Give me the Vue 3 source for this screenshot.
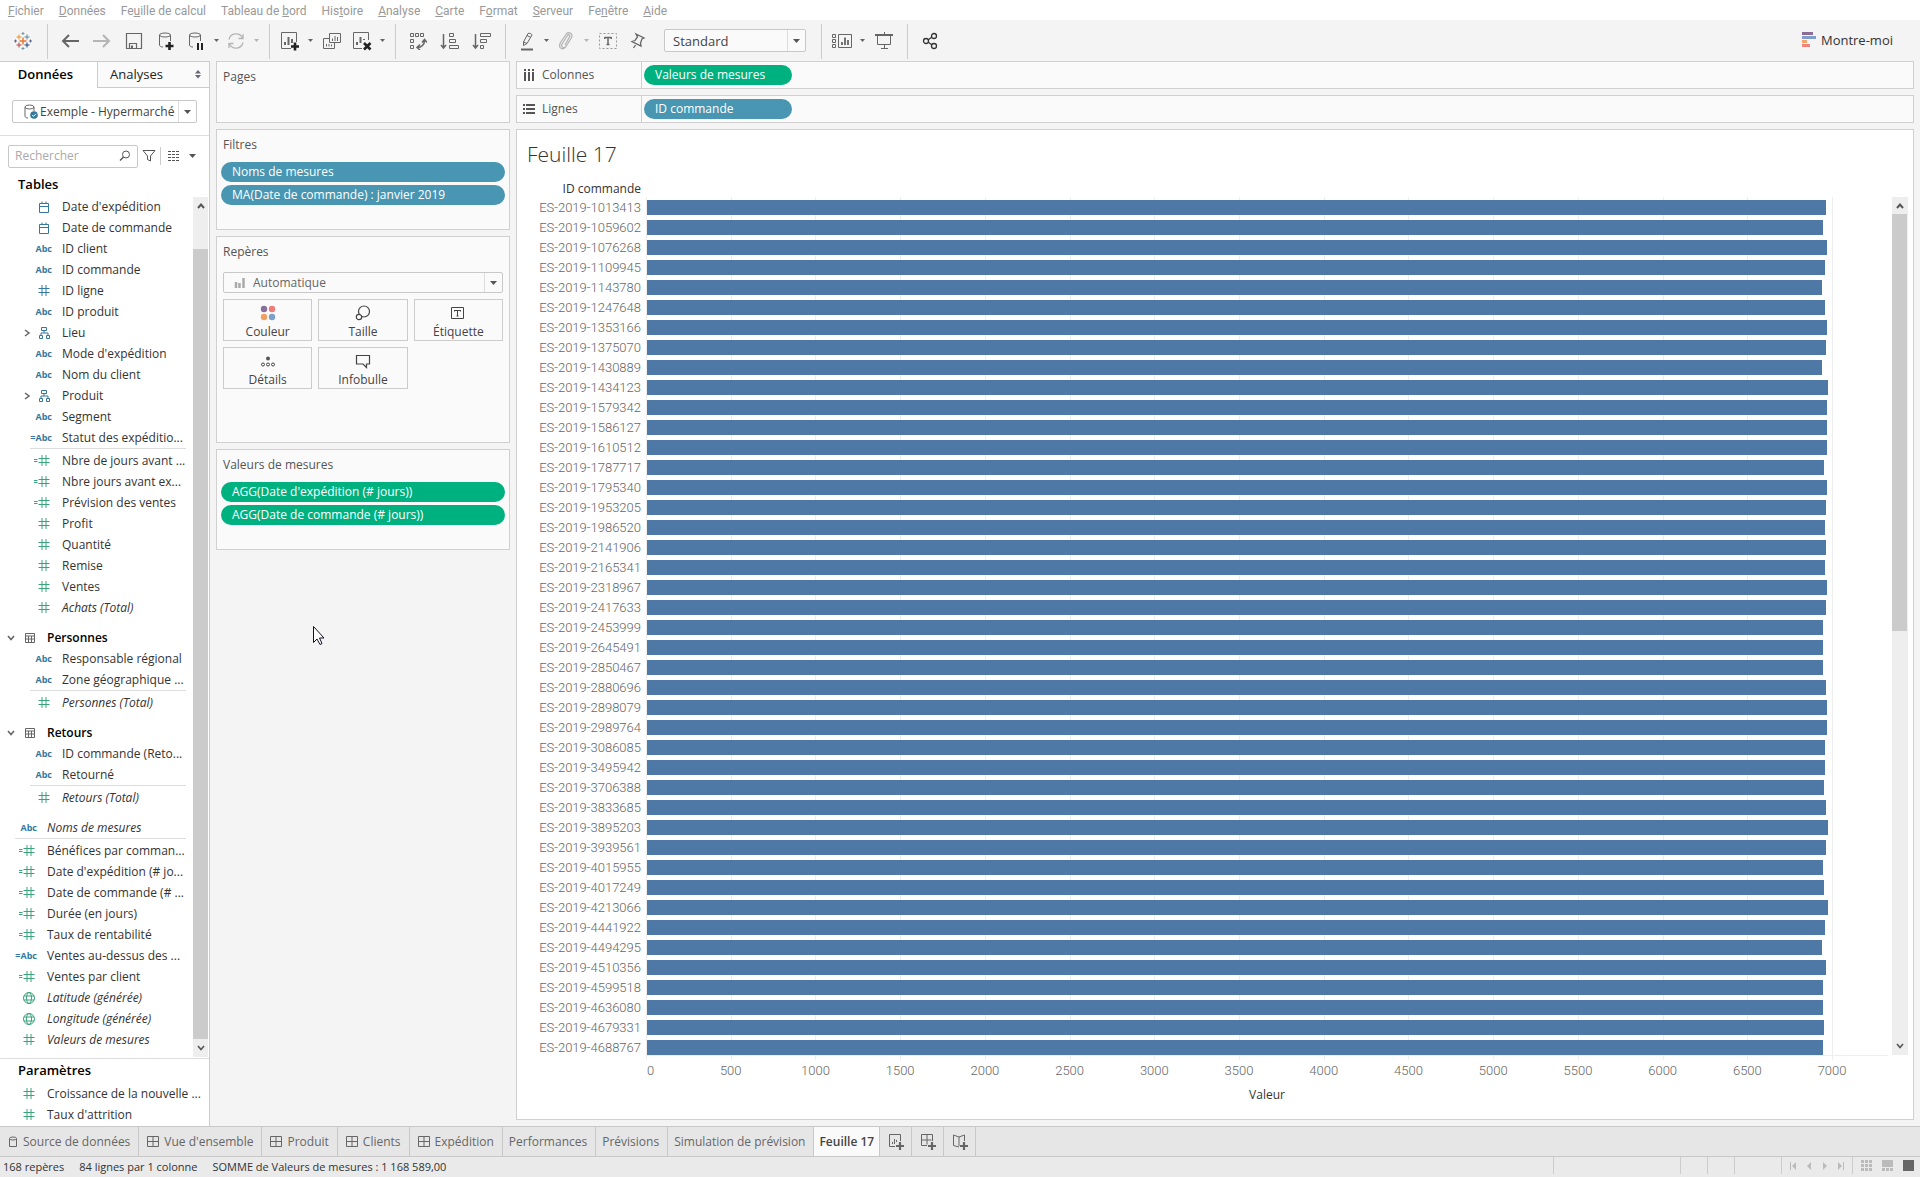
<script setup>
import { h, ref } from 'vue'

const hash = '<path d="M6 2v11M10 2v11M2.500 5.500h11M2.500 9.500h11"/>'
const cyl = '<ellipse cx="8" cy="4" rx="5.500" ry="2"/><path d="M2.500 4v10c0 1.200 1.500 2 3.500 2M13.500 4v6"/>'
const icons = {
  back: [18, 18, '<path stroke-width="2" d="M2 9h16M8 3 2 9l6 6"/>'],
  save: [18, 18, '<path stroke-width="1.200" d="M1.500 1.500h15v15h-15zM4.500 16v-4.500h7V16"/><path stroke-width="2" d="M7 13.500v2.500"/>'],
  dbadd: [18, 20, `${cyl}<path stroke="#222" stroke-width="2.600" d="M12.500 11v8M8.500 15h8"/>`],
  dbpause: [18, 20, `${cyl}<path stroke="#222" stroke-width="2" d="M11 12v7M15 12v7"/>`],
  refresh: [18, 18, '<path stroke-width="1.300" d="M2 7.500A7.200 7.200 0 0 1 15.500 6M16 10.500A7.200 7.200 0 0 1 2.500 12M16 2v4.500h-4.500M2 16v-4.500h4.500"/>'],
  sheetadd: [20, 20, '<path d="M11 17.500H1.500v-16h15V11"/><path stroke-width="2" d="M5 14v-3M8.500 14V6M12 12V8"/><path stroke="#222" stroke-width="2.600" d="M15 11.500v8M11 15.500h8"/>'],
  duplicate: [18, 18, '<path d="M6.500 1.500h11v9h-11zM6 6.500H.5v10h11v-6M9.500 9V6.500M12 9V4M14.500 9V5M3.500 14.500v-2.500M6 14.500v-2.500M8.500 14.500v-2"/>'],
  sheetclear: [20, 20, '<path d="M10 17.500H1.500v-16h15V9"/><path stroke-width="2" d="M5 14v-3M8.500 12V6M12 9V8"/><path stroke="#222" stroke-width="2.600" d="m12 12 6.500 6.500M18.500 12 12 18.500"/>'],
  swap: [18, 18, '<path d="M1.500 1.500h3v3h-3zM6.500 1.500h3v3h-3zM11.500 1.500h3v3h-3zM1.500 7.500h3v3h-3zM1.500 13.500h3v3h-3z"/><path stroke-width="1.500" d="M8.500 15.500c4 0 7-3 7-7M13 10.500l2.500-3 2.500 3M11 12.500l-3 3 3 2.500"/>'],
  asc: [20, 18, '<path stroke-width="1.500" d="M3.500 2v14M1 13l2.500 3 2.500-3"/><path d="M9.500 1.500h4v3h-4zM9.500 7.500h6v3h-6zM9.500 13.500h9v3h-9z"/>'],
  desc: [20, 18, '<path stroke-width="1.500" d="M3.500 2v14M1 13l2.500 3 2.500-3"/><path d="M8.500 1.500h10v3h-10zM8.500 7.500h6v3h-6zM8.500 13.500h3v3h-3z"/>'],
  pen: [18, 20, '<path d="M11 2.500 6.500 11v3.500L10 12.500l5-8.500c0-1-3-2.500-4-1.500zM6.500 11l3.500 1.500M10 4.500l4 2"/><path stroke-width="2" d="M4 18.500h12"/>'],
  clip: [16, 18, '<path stroke-width="1.300" d="m7 13 4.500-8c1-2-1-3-2-1.500L4 12c-1.500 3 2 5 4 2.500l5.500-9c2-4-3.500-6.500-5.500-3L2.500 10.500c-2.500 5 1 7.500 4 5.500"/>'],
  text: [18, 18, '<path stroke-dasharray="2 2" d="M.5 1.500h17v15H.5z"/><path stroke="#666" stroke-width="1.500" d="M6 5.500h6M9 5.500V13M7.500 12.500h3M5.800 5v2M12.200 5v2"/>'],
  pin: [16, 18, '<path stroke-width="1.300" d="m6 2 8 4-2 1-1.500 4 .5 3-9-4.500 3-1L7.500 5 6 2zM6.500 11.500 3.500 16"/>'],
  cards: [20, 16, '<path d="M.5 1.500h3v3h-3zM.5 6.500h3v3h-3zM.5 11.500h3v3h-3zM6.500 1.500h13v13h-13z"/><path stroke-width="1.800" d="M10 12V9M13 12V4.500M16 12V7"/>'],
  present: [18, 18, '<path d="M2.500 3v9.500h13V3M9.500 0v2M9.500 12v4M6 16.500h7"/><path stroke-width="2" d="M0 3h18"/>'],
  share: [16, 18, '<g stroke="#333" stroke-width="1.300"><circle cx="4" cy="9" r="2.500"/><circle cx="12" cy="4" r="2.500"/><circle cx="12" cy="14" r="2.500"/><path d="m6.200 7.700 3.600-2.400M6.200 10.300l3.600 2.400"/></g>'],
  logo: [18, 18, '<g><path stroke="#e8762d" stroke-width="1.400" d="M9 5.500v7M5.500 9h7"/><path stroke="#eb9129" d="M5 2.500v5M2.500 5h5"/><path stroke="#5b879b" d="M13 2.500v5M10.500 5h5"/><path stroke="#b3433f" d="M5 10.500v5M2.500 13h5"/><path stroke="#1f457e" d="M13 10.500v5M10.500 13h5"/><path stroke="#7199a6" d="M9 0v3M7.500 1.500h3M9 15v3M7.500 16.500h3"/><path stroke="#5c6692" d="M1.500 7.500v3M0 9h3M16.500 7.500v3M15 9h3"/></g>'],
  showme: [16, 16, '<g stroke="none"><path fill="#8a6d97" d="M2 0h11v3H2z"/><path fill="#7f9fc9" d="M2 4h14v3H2z"/><path fill="#f3a268" d="M2 8h5v3H2z"/><path fill="#f2837a" d="M2 12h8v3H2z"/></g>'],
  caret: [7, 4, '<path stroke="none" fill="currentColor" d="M0 0h7L3.500 4z"/>'],
  smallcaret: [5, 3, '<path stroke="none" fill="currentColor" d="M0 0h5L2.500 3z"/>'],
  updown: [6, 9, '<path stroke="none" fill="#667" d="M0 3.500h6L3 0zM0 5h6L3 8.500z"/>'],
  source: [16, 18, '<ellipse cx="6.500" cy="4" rx="4.500" ry="2"/><path d="M2 4v9c0 1.200 1 2 3 2M11 4v4"/><circle cx="11" cy="12" r="3.800" fill="#35789b" stroke="none"/><path stroke="#fff" d="m9.200 12 1.300 1.400L13 10.800"/>'],
  search: [12, 12, '<circle cx="7" cy="4.500" r="3.500"/><path stroke-width="1.400" d="M4.500 7 1 10.500"/>'],
  filter: [14, 14, '<path d="M1 1.500h12L8.500 7v5L5.500 10.500V7z"/>'],
  list: [12, 10, '<path stroke-dasharray="3 1" d="M0 .5h12M0 3.500h12M0 6.500h12M0 9.500h12"/>'],
  date: [16, 16, '<path d="M3.500 4.500h9v9h-9zM3.500 7.500h9M6 2.500v2M10 2.500v2"/>'],
  hash: [16, 16, hash],
  calc: [22, 16, `<g transform="translate(6 0)">${hash}</g><path d="M4 6.500h3.500M4 8.500h3.500"/>`],
  tree: [16, 16, '<path d="M5.500 2.500h5v3h-5zM3.500 10.500h3v3h-3zM10.500 10.500h3v3h-3zM8 5.500v2.500M5 10.500V8h7v2.500"/>'],
  globe: [16, 16, '<circle cx="8" cy="8" r="5.500"/><ellipse cx="8" cy="8" rx="2.500" ry="5.500"/><path d="M3 6h10M3 10h10"/>'],
  right: [8, 8, '<path stroke="#666" stroke-width="1.500" d="m2 1 4 3-4 3"/>'],
  down: [8, 8, '<path stroke-width="1.600" d="m1 2 3 3.500L7 2"/>'],
  up: [8, 8, '<path stroke-width="2" d="m1 6 3-3.500L7 6"/>'],
  table: [12, 12, '<path d="M1.500 1.500h9v9h-9zM1.500 4h9M1.500 7h9M4.500 4v6M7.500 4v6"/>'],
  colonnes: [12, 12, '<path stroke-width="2" d="M2 3v9M6 3v9M10 3v9M2 0v2M6 0v2M10 0v2"/>'],
  lignes: [12, 12, '<path stroke-width="2" d="M3 2h9M3 6h9M3 10h9M0 2h2M0 6h2M0 10h2"/>'],
  mark: [12, 12, '<path stroke="#aaa" stroke-width="2.500" d="M2 5v6M5.500 6v5M9.500 1v10"/>'],
  couleur: [16, 16, '<g stroke="none"><circle cx="4" cy="4" r="3.200" fill="#86709b"/><circle cx="12" cy="4" r="3.200" fill="#ee7c78"/><circle cx="4" cy="12" r="3.200" fill="#f2a062"/><circle cx="12" cy="12" r="3.200" fill="#7d9fc9"/></g>'],
  taille: [16, 16, '<circle cx="9" cy="6.500" r="5.500" stroke-width="1.200"/><circle cx="4" cy="12" r="2.700" fill="#fafafa" stroke-width="1.200"/>'],
  etiquette: [16, 16, '<path d="M1.500 2.500h12v11h-12zM5 5.500h5M7.500 5.500v5.500M6.500 11h2M4.500 5v1.500M10.500 5v1.500"/>'],
  details: [16, 16, '<circle cx="8" cy="5.500" r="2" fill="#555" stroke="none"/><circle cx="3" cy="11.500" r="1.500"/><circle cx="8" cy="11.500" r="1.500"/><circle cx="13" cy="11.500" r="1.500"/>'],
  infobulle: [16, 16, '<path stroke-width="1.200" d="M1.500 2.500h13v8.500h-3v3.500L8 11H1.500z"/>'],
  dbtab: [10, 12, '<ellipse cx="5" cy="2.500" rx="3.500" ry="1.500"/><path d="M1.500 2.500v8h7v-8"/>'],
  dash: [12, 12, '<path d="M.5.5h11v10H.5zM6 .5v10M.5 5.500h11"/>'],
  newsheet: [16, 16, '<path d="M7 12.500H1.500V.5h11V7M4.500 10V8M6.500 10V5M8.500 8V6"/><path stroke-width="2.200" d="M12 8v8M8 12h8"/>'],
  newdash: [16, 16, '<path d="M7 11.500H1.500V.5h11V7M7 .5v10M1.500 6h10"/><path stroke-width="2.200" d="M12 8v8M8 12h8"/>'],
  newstory: [16, 16, '<path d="M7 13 1.500 11.500V1L7 3l5.500-2v6M7 3v9"/><path stroke-width="2.200" d="M12 8v8M8 12h8"/>'],
  first: [8, 8, '<path stroke="none" fill="currentColor" d="M1 0h1v8H1zM7 0v8L3 4z"/>'],
  prev: [8, 8, '<path stroke="none" fill="currentColor" d="M6 0v8L2 4z"/>'],
  next: [8, 8, '<path stroke="none" fill="currentColor" d="M2 0v8l4-4z"/>'],
  last: [8, 8, '<path stroke="none" fill="currentColor" d="M6 0h1v8H6zM1 0v8l4-4z"/>'],
  grid: [11, 11, '<path stroke-width="3" stroke-dasharray="3 1" d="M0 1.500h11M0 5.500h11M0 9.500h11"/>'],
  film: [11, 11, '<path stroke="none" fill="currentColor" d="M0 0h11v7H0z"/><path stroke-width="3" stroke-dasharray="3 1" d="M0 9.500h11"/>'],
  full: [11, 11, '<path stroke="none" fill="#666" d="M0 0h11v11H0z"/>'],
  cursor: [12, 20, '<path fill="#fff" stroke="#112" d="M.5.5v16l3.500-3.500 3 5.500 2-1-2.500-5.500H11z"/>']
}
const Icon = (props) => {
  const [w, ht, body] = icons[props.name]
  return h('svg', { width: w, height: ht, viewBox: `0 0 ${w} ${ht}`, fill: 'none', stroke: 'currentColor', 'aria-hidden': 'true', innerHTML: body })
}
Icon.props = ['name']

const menus = [['', 'F', 'ichier'], ['', 'D', 'onnées'], ['Fe', 'u', 'ille de calcul'], ['Tableau de ', 'b', 'ord'], ['His', 't', 'oire'], ['', 'A', 'nalyse'], ['', 'C', 'arte'], ['F', 'o', 'rmat'], ['', 'S', 'erveur'], ['Fe', 'n', 'être'], ['', 'A', 'ide']]
const groups = [
  [['back', 'Retour'], ['back', 'Avancer', 'flip dim'], ['save', 'Enregistrer'], ['dbadd', 'Nouvelle source'], ['dbpause', 'Suspendre', 'slim'], ['smallcaret', 'Options de pause', 'thin'], ['refresh', 'Actualiser', 'slim dim'], ['smallcaret', "Options d'actualisation", 'thin dim']],
  [['sheetadd', 'Nouvelle feuille', 'slim'], ['smallcaret', 'Options de feuille', 'thin'], ['duplicate', 'Dupliquer'], ['sheetclear', 'Effacer', 'slim'], ['smallcaret', "Options d'effacement", 'thin']],
  [['swap', 'Permuter'], ['asc', 'Tri croissant'], ['desc', 'Tri décroissant']],
  [['pen', 'Surligner', 'slim'], ['smallcaret', 'Options de surlignage', 'thin'], ['clip', 'Grouper', 'slim dim'], ['smallcaret', 'Options de groupe', 'thin dim'], ['text', 'Étiquettes', 'soft'], ['pin', 'Épingler', 'slim']],
  [['cards', 'Cartes', 'slim'], ['smallcaret', 'Options de cartes', 'thin'], ['present', 'Présentation']],
  [['share', 'Partager']]
]

const sections = [
  { rows: [['date', "Date d'expédition"], ['date', 'Date de commande'], ['abc', 'ID client'], ['abc', 'ID commande'], ['hash', 'ID ligne', 'blue'], ['abc', 'ID produit'], ['tree', 'Lieu', 'open'], ['abc', "Mode d'expédition"], ['abc', 'Nom du client'], ['tree', 'Produit', 'open'], ['abc', 'Segment'], ['=abc', 'Statut des expéditio...']],
    more: [['calc', 'Nbre de jours avant ...'], ['calc', 'Nbre jours avant ex...'], ['calc', 'Prévision des ventes'], ['hash', 'Profit'], ['hash', 'Quantité'], ['hash', 'Remise'], ['hash', 'Ventes'], ['hash', 'Achats (Total)', 'gen']] },
  { title: 'Personnes', rows: [['abc', 'Responsable régional'], ['abc', 'Zone géographique ...']], more: [['hash', 'Personnes (Total)', 'gen']] },
  { title: 'Retours', rows: [['abc', 'ID commande (Reto...'], ['abc', 'Retourné']], more: [['hash', 'Retours (Total)', 'gen']] },
  { flat: true, rows: [['abc', 'Noms de mesures', 'gen']],
    more: [['calc', 'Bénéfices par comman...'], ['calc', "Date d'expédition (# jo..."], ['calc', 'Date de commande (# ...'], ['calc', 'Durée (en jours)'], ['calc', 'Taux de rentabilité'], ['=abc', 'Ventes au-dessus des ...'], ['calc', 'Ventes par client'], ['globe', 'Latitude (générée)', 'gen'], ['globe', 'Longitude (générée)', 'gen'], ['hash', 'Valeurs de mesures', 'gen']] }
]
const params = ['Croissance de la nouvelle ...', "Taux d'attrition"]
const tone = (r) => (['date', 'abc', '=abc', 'tree'].includes(r[0]) || r[2] === 'blue' ? 'blue' : 'green')

const marks = [['couleur', 'Couleur'], ['taille', 'Taille'], ['etiquette', 'Étiquette'], ['details', 'Détails'], ['infobulle', 'Infobulle']]
const shelves = [['colonnes', 'Colonnes', 'Valeurs de mesures', 'measure'], ['lignes', 'Lignes', 'ID commande', 'dimension']]

const domain = 7330
const orders = [
  ['1013413', 6959], ['1059602', 6941], ['1076268', 6965], ['1109945', 6953], ['1143780', 6935], ['1247648', 6953], ['1353166', 6965], ['1375070', 6959], ['1430889', 6935], ['1434123', 6971],
  ['1579342', 6965], ['1586127', 6965], ['1610512', 6965], ['1787717', 6947], ['1795340', 6965], ['1953205', 6959], ['1986520', 6953], ['2141906', 6959], ['2165341', 6953], ['2318967', 6965],
  ['2417633', 6959], ['2453999', 6941], ['2645491', 6941], ['2850467', 6941], ['2880696', 6959], ['2898079', 6965], ['2989764', 6965], ['3086085', 6953], ['3495942', 6953], ['3706388', 6947],
  ['3833685', 6959], ['3895203', 6971], ['3939561', 6959], ['4015955', 6941], ['4017249', 6947], ['4213066', 6971], ['4441922', 6953], ['4494295', 6935], ['4510356', 6959], ['4599518', 6941],
  ['4636080', 6941], ['4679331', 6947], ['4688767', 6941]
]
const ticks = Array.from({ length: 15 }, (_, i) => i * 500)
const pct = (v) => `${(v / domain) * 100}%`

const tabs = [['dbtab', 'Source de données'], ['dash', "Vue d'ensemble"], ['dash', 'Produit'], ['dash', 'Clients'], ['dash', 'Expédition'], [null, 'Performances'], [null, 'Prévisions'], [null, 'Simulation de prévision'], [null, 'Feuille 17']]
const search = ref('')
</script>

<template>
  <div class="app">
    <nav class="menu">
      <a v-for="m in menus" :key="m.join('')" href="#">{{ m[0] }}<u>{{ m[1] }}</u>{{ m[2] }}</a>
    </nav>

    <header class="toolbar">
      <div class="logo"><Icon name="logo" /></div>
      <div v-for="(g, i) in groups" :key="i" class="group">
        <button v-for="b in g" :key="b[1]" type="button" :class="b[2]" :aria-label="b[1]"><Icon :name="b[0]" /></button>
        <span v-if="i === 3" class="select fit">
          <select aria-label="Ajustement"><option>Standard</option></select>
          <span class="arrow"><Icon name="caret" /></span>
        </span>
      </div>
      <button type="button" class="showme"><Icon name="showme" />Montre-moi</button>
    </header>

    <main class="body">
      <aside class="data">
        <div class="panel-tabs">
          <button type="button" class="on">Données</button>
          <button type="button" class="off">Analyses<Icon name="updown" /></button>
        </div>
        <div class="source">
          <span class="select">
            <span class="lead"><Icon name="source" /></span>
            <select aria-label="Source de données"><option>Exemple - Hypermarché</option></select>
            <span class="arrow"><Icon name="caret" /></span>
          </span>
        </div>
        <div class="search">
          <label class="box"><input v-model="search" type="text" placeholder="Rechercher" aria-label="Rechercher"><Icon name="search" /></label>
          <button type="button" aria-label="Filtrer"><Icon name="filter" /></button>
          <button type="button" class="view" aria-label="Affichage"><Icon name="list" /><Icon name="caret" /></button>
        </div>
        <h2>Tables</h2>
        <div class="tree">
          <div class="fields">
            <section v-for="(s, i) in sections" :key="i" :class="{ flat: s.flat }">
              <h3 v-if="s.title"><Icon name="down" /><Icon name="table" />{{ s.title }}</h3>
              <ul v-for="part in ['rows', 'more']" :key="part" :class="part">
                <li v-for="r in s[part]" :key="r[1]" :class="r[2]">
                  <span class="twist"><Icon v-if="r[2] === 'open'" name="right" /></span>
                  <span class="kind" :class="tone(r)">
                    <b v-if="r[0].endsWith('abc')"><i v-if="r[0] === '=abc'">=</i>Abc</b>
                    <Icon v-else :name="r[0]" />
                  </span>
                  <span class="name">{{ r[1] }}</span>
                </li>
              </ul>
            </section>
          </div>
          <div class="scroll">
            <Icon name="up" />
            <div class="thumb"></div>
            <Icon name="down" />
          </div>
        </div>
        <div class="params">
          <h2>Paramètres</h2>
          <ul class="flat">
            <li v-for="p in params" :key="p">
              <span class="kind green"><Icon name="hash" /></span>
              <span class="name">{{ p }}</span>
            </li>
          </ul>
        </div>
      </aside>

      <div class="cards">
        <section class="card pages"><h4>Pages</h4></section>
        <section class="card">
          <h4>Filtres</h4>
          <div class="pill dimension">Noms de mesures</div>
          <div class="pill dimension">MA(Date de commande) : janvier 2019</div>
        </section>
        <section class="card marks">
          <h4>Repères</h4>
          <span class="select">
            <span class="lead"><Icon name="mark" /></span>
            <select aria-label="Type de repère"><option>Automatique</option></select>
            <span class="arrow"><Icon name="caret" /></span>
          </span>
          <div class="mark-grid">
            <button v-for="m in marks" :key="m[1]" type="button"><Icon :name="m[0]" />{{ m[1] }}</button>
          </div>
        </section>
        <section class="card">
          <h4>Valeurs de mesures</h4>
          <div class="pill measure">AGG(Date d'expédition (# jours))</div>
          <div class="pill measure">AGG(Date de commande (# jours))</div>
        </section>
        <Icon class="cursor" name="cursor" />
      </div>

      <div class="work">
        <div v-for="s in shelves" :key="s[1]" class="shelf">
          <div class="shelf-name"><Icon :name="s[0]" />{{ s[1] }}</div>
          <div class="pill" :class="s[3]">{{ s[2] }}</div>
        </div>
        <section class="sheet">
          <h1>Feuille 17</h1>
          <div class="head">ID commande</div>
          <div class="chart">
            <div class="labels">
              <div v-for="o in orders" :key="o[0]">ES-2019-{{ o[0] }}</div>
            </div>
            <div class="plot">
              <div class="bars">
                <div v-for="t in ticks" :key="t" class="line" :style="{ left: pct(t) }"></div>
                <div v-for="o in orders" :key="o[0]" class="bar" :style="{ width: pct(o[1]) }"></div>
              </div>
              <div class="axis">
                <span v-for="t in ticks" :key="t" :class="{ zero: t === 0 }" :style="{ left: pct(t) }">{{ t }}</span>
              </div>
              <div class="axis-title">Valeur</div>
            </div>
            <div class="scroll">
              <Icon name="up" />
              <div class="thumb"></div>
              <Icon name="down" />
            </div>
          </div>
        </section>
      </div>
    </main>

    <nav class="tabs">
      <button v-for="t in tabs" :key="t[1]" type="button" :class="{ active: t[1] === 'Feuille 17', plain: !t[0] }"><Icon v-if="t[0]" :name="t[0]" />{{ t[1] }}</button>
      <button type="button" class="new" aria-label="Nouvelle feuille"><Icon name="newsheet" /></button>
      <button type="button" class="new" aria-label="Nouveau tableau de bord"><Icon name="newdash" /></button>
      <button type="button" class="new" aria-label="Nouvelle histoire"><Icon name="newstory" /></button>
    </nav>

    <footer class="status">
      <span>168 repères</span>
      <span>84 lignes par 1 colonne</span>
      <span>SOMME de Valeurs de mesures : 1 168 589,00</span>
      <div class="cells">
        <i class="wide"></i><i></i><i></i><i class="mid"></i>
        <div class="nav">
          <button v-for="n in ['first', 'prev', 'next', 'last']" :key="n" type="button" :aria-label="n"><Icon :name="n" /></button>
        </div>
        <div class="views">
          <button v-for="n in ['grid', 'film', 'full']" :key="n" type="button" :aria-label="n"><Icon :name="n" /></button>
        </div>
      </div>
    </footer>
  </div>
</template>

<style>
body { background: #f4f4f4; }
</style>

<style scoped>
* { box-sizing: border-box; }
.app { display: flex; flex-direction: column; min-height: 100vh; background: #f4f4f4; color: #333; font: 12px/20px "Open Sans", "Noto Sans", sans-serif; }
svg { display: block; flex: none; }
h1, h2, h3, h4, ul { margin: 0; padding: 0; list-style: none; font-weight: 400; }
button { display: flex; align-items: center; justify-content: center; padding: 0; border: 0; background: none; color: inherit; font: inherit; }
input, select { min-width: 0; border: 0; outline: 0; background: none; color: inherit; font: inherit; appearance: none; }

.menu { display: flex; gap: 15px; height: 20px; padding-left: 8px; background: #fff; color: #999; line-height: 22px; font-family: Roboto, "Open Sans", sans-serif; }
.menu a { color: inherit; text-decoration: none; white-space: nowrap; }

.toolbar { display: flex; align-items: flex-start; height: 41px; padding-top: 4px; color: #666; }
.logo, .group { display: flex; align-items: center; height: 35px; padding: 0 7px 2px 6px; border-right: 1px solid #ccc; }
.logo { justify-content: center; width: 48px; }
.group:nth-last-child(2) { border-right: 0; }
.group button { width: 32px; height: 32px; }
.group .slim { width: 28px; }
.group .thin { width: 12px; }
.dim { color: #b5b5b5; }
.soft { color: #999; }
.flip { transform: scaleX(-1); }
.showme { gap: 5px; height: 32px; margin: 0 27px 0 auto; color: #333; font-size: 13px; }

.select { position: relative; display: flex; align-items: center; border: 1px solid #c8c8c8; border-radius: 2px; background: #fafafa; }
.select select { flex: 1; align-self: stretch; padding: 0 28px 0 8px; }
.arrow { position: absolute; top: 0; right: 0; bottom: 0; display: flex; align-items: center; justify-content: center; width: 18px; border-left: 1px solid #ddd; color: #555; pointer-events: none; }
.lead { position: absolute; left: 10px; color: #666; pointer-events: none; }
.fit { width: 142px; height: 23px; margin: 0 8px 0 12px; font-size: 13px; color: #444; }

.body { display: flex; flex: 1; }
.data { display: flex; flex-direction: column; width: 210px; border: 1px solid #ccc; border-width: 1px 1px 0 0; background: #fff; flex: none; }
.panel-tabs { display: flex; height: 26px; color: #222; font-size: 13px; }
.panel-tabs .on { width: 97px; padding: 0 6px 2px 0; font-weight: 600; color: #000; }
.panel-tabs .off { flex: 1; justify-content: space-between; padding: 0 8px 1px 12px; border: 1px solid #ccc; border-width: 0 0 1px 1px; background: #fafafa; font-size: 13px; }
.source { padding: 12px; border-bottom: 1px solid #ddd; }
.source .select { height: 23px; background: #fff; color: #444; }
.source select { padding-left: 27px; padding-right: 20px; }
.search { display: flex; align-items: center; height: 40px; padding: 0 13px 0 8px; color: #555; }
.box { display: flex; align-items: center; width: 130px; height: 23px; padding: 0 6px; border: 1px solid #c8c8c8; border-radius: 2px; }
.box input { flex: 1; width: 0; padding: 0; }
.box input::placeholder { color: #aaa; opacity: 1; }
.search button { width: 22px; }
.search .view { flex: 1; justify-content: space-between; height: 18px; padding-left: 7px; border-left: 1px solid #ccc; }
h2 { margin-bottom: 4px; padding-left: 18px; font-size: 13px; line-height: 16px; font-weight: 600; color: #000; }
.tree { display: flex; border-bottom: 1px solid #ddd; height: 863px; }
.fields { flex: 1; min-width: 0; padding-right: 7px; }
.fields section { margin-bottom: 9px; padding-left: 23px; }
.fields .flat { padding-left: 8px; }
.more { border-top: 1px solid #ddd; padding-top: 1px; margin-left: 7px; }
.more li { margin-left: -7px; }
li { display: flex; align-items: center; height: 21px; white-space: nowrap; }
.twist { width: 0; }
.kind { display: flex; align-items: center; justify-content: flex-end; width: 29px; margin-right: 10px; flex: none; }
.kind b { font-size: 9px; font-weight: 700; }
.kind i { font-style: normal; }
.blue { color: #35789b; }
.green { color: #3ba37c; }
li.blue { color: inherit; }
.gen .name { font-style: italic; }
h3 { display: flex; align-items: center; gap: 9px; height: 21px; margin-left: -16px; color: #000; font-size: 12px; font-weight: 600; }
h3 svg { color: #666; }
h3 svg + svg { margin-right: 2px; }
.scroll { display: flex; flex-direction: column; align-items: center; justify-content: space-between; width: 15px; padding: 5px 0; background: #eee; color: #555; }
.scroll .thumb { width: 15px; background: #cbcbcb; }
.tree .scroll { height: 860px; margin: 1px 1px 0 0; }
.tree .thumb { flex: 1; margin: 39px 0 5px; }
.params { height: 67px; padding-top: 3px; }
.params ul { padding: 1px 0 0 8px; }

.cards { position: relative; width: 294px; margin-left: 6px; flex: none; }
.card { height: 101px; margin-bottom: 6px; padding: 5px 4px; border: 1px solid #d0d0d0; background: #fafafa; }
.card h4 { padding-left: 2px; margin-bottom: 7px; color: #555; line-height: 20px; }
.pages { height: 62px; }
.pill { height: 20px; margin-bottom: 3px; padding-left: 11px; border-radius: 10px; color: #fff; font-weight: 500; }
.dimension { background: #4996b2; }
.measure { background: #00b180; }
.marks { height: 207px; padding: 5px 6px; }
.marks h4 { padding-left: 0; margin-bottom: 10px; }
.marks .select { height: 21px; margin-bottom: 6px; color: #666; }
.marks select { padding-left: 29px; }
.mark-grid { display: grid; grid-template-columns: repeat(3, 1fr); gap: 6px; }
.mark-grid button { flex-direction: column; gap: 1px; height: 42px; padding-top: 6px; border: 1px solid #ccc; color: #444; line-height: 20px; }
.cursor { position: absolute; left: 97px; top: 565px; }

.work { display: flex; flex-direction: column; flex: 1; margin: 0 6px; }
.shelf { display: flex; align-items: center; height: 28px; margin-bottom: 6px; border: 1px solid #d0d0d0; background: #fafafa; }
.shelf-name { display: flex; align-items: center; gap: 7px; width: 125px; height: 26px; padding-left: 6px; border-right: 1px solid #d0d0d0; color: #555; }
.shelf .pill { width: 148px; margin: 0 2px; }
.sheet { flex: 1; margin-bottom: 6px; border: 1px solid #d0d0d0; background: #fff; }
.sheet h1 { padding: 9px 10px 11px; font-size: 21px; line-height: 30px; font-weight: 300; color: #333; }
.head { width: 124px; text-align: right; line-height: 17px; font-weight: 500; }
.chart { display: flex; }
.labels { width: 124px; padding-top: 1px; text-align: right; }
.labels, .axis { color: #666; font-family: Roboto, "Open Sans", sans-serif; font-size: 13px; font-weight: 300; }
.plot { flex: 1; margin: 0 4px 0 5px; }
.bars { position: relative; height: 863px; padding-top: 3px; }
.bars::after { content: ""; position: absolute; left: 0; right: 0; top: 858px; border-top: 1px solid #eee; }
.line { position: absolute; top: 0; bottom: 0; width: 1px; background: #eee; }
.bar { position: relative; height: 15px; margin: 0 0 5px 1px; background: #4e79a7; }
.axis { position: relative; height: 22px; line-height: 22px; }
.axis span { position: absolute; transform: translateX(-50%); }
.axis .zero { padding-left: 1px; transform: none; }
.axis-title { padding-top: 3px; text-align: center; }
.sheet .scroll { width: 16px; height: 858px; margin-right: 5px; }
.sheet .thumb { height: 417px; margin: 4px 1px auto 0; }

.tabs { display: flex; height: 31px; border: 1px solid #c8c8c8; border-width: 1px 0; background: #e6e6e6; color: #666; }
.tabs button { gap: 5px; padding: 0 8px; border-right: 1px solid #c8c8c8; white-space: nowrap; }
.tabs .plain { padding-left: 6px; }
.tabs .active { padding: 0 5px; background: #fafafa; color: #444; font-weight: 600; }
.tabs .new { width: 32px; padding: 0; }
.status { display: flex; gap: 15px; height: 20px; padding-left: 3px; background: #eaeaea; font-size: 11px; }
.cells { display: flex; height: 17px; margin-left: auto; color: #bbb; }
.cells i { width: 27px; border-left: 1px solid #ccc; }
.cells .wide { width: 127px; }
.cells .mid { width: 47px; }
.nav, .views { display: flex; justify-content: space-between; border-left: 1px solid #ccc; }
.nav { width: 71px; padding: 0 7px; }
.views { width: 68px; padding: 0 6px 0 8px; }
</style>
